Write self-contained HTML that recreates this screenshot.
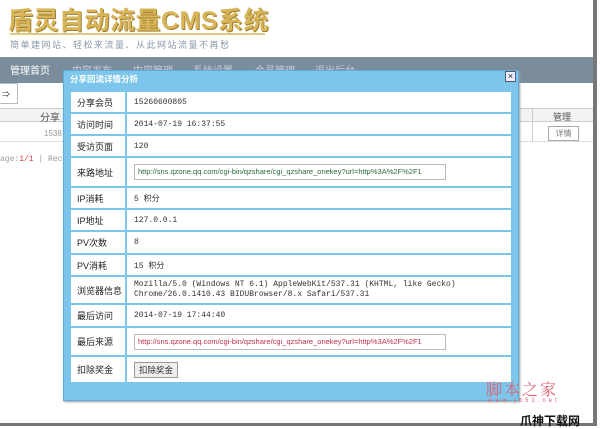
<!DOCTYPE html>
<html><head><meta charset="utf-8"><style>
*{margin:0;padding:0;box-sizing:border-box}
body{width:600px;height:429px;background:#fff;position:relative;overflow:hidden;font-family:"Liberation Sans","Noto Sans CJK SC",sans-serif;font-size:9px;color:#333}
.abs{position:absolute}
.mono{font-family:"Liberation Mono","Noto Sans CJK SC",monospace;font-size:8px}
.row{position:absolute;left:71px;width:440px;background:#fff;border-top:2px solid #7cc6ec}
.lab{position:absolute;left:0;top:0;bottom:0;width:56px;border-right:2px solid #7cc6ec;padding-left:6px;display:flex;align-items:center;font-size:9px;color:#222}
.val{position:absolute;left:63px;top:0;bottom:0;right:4px;display:flex;align-items:center}
.inp{border:1px solid #bbb;height:16px;width:312px;font-size:7.5px;padding-left:3px;line-height:14px;white-space:nowrap;overflow:hidden;color:#2a6a3a}
</style></head><body>
<div class="abs" style="left:8px;top:1px;font-size:25px;font-weight:bold;color:#d9b55a;letter-spacing:0.5px;text-shadow:1px 1px 0 #a08030">盾灵自动流量CMS系统</div>
<div class="abs" style="left:10px;top:33px;width:255px;height:2px;background:#e0c880"></div>
<div class="abs" style="left:10px;top:38px;font-size:9px;color:#8899aa;letter-spacing:1.5px">简单建网站、轻松来流量、从此网站流量不再愁</div>
<div class="abs" style="left:0;top:57px;width:593px;height:26px;background:#7b8d9a"></div>
<div class="abs" style="left:10px;top:62px;color:#fff;font-size:10px">管理首页</div>
<div class="abs" style="left:72px;top:62px;color:#ccd;font-size:10px">内容发布</div>
<div class="abs" style="left:133px;top:62px;color:#ccd;font-size:10px">内容管理</div>
<div class="abs" style="left:193px;top:62px;color:#ccd;font-size:10px">系统设置</div>
<div class="abs" style="left:255px;top:62px;color:#ccd;font-size:10px">会员管理</div>
<div class="abs" style="left:315px;top:62px;color:#ccd;font-size:10px">退出后台</div>
<div class="abs" style="left:0;top:83px;width:18px;height:21px;border:1px solid #bbb;border-left:none;font-size:8px;padding:5px 2px">⇒</div>
<div class="abs" style="left:0;top:108px;width:593px;height:14px;background:#f0f2f4;border-top:1px solid #ccc;border-bottom:1px solid #ccc"></div>
<div class="abs" style="left:40px;top:109px;font-size:10px;color:#555">分享</div>
<div class="abs" style="left:532px;top:108px;height:33px;border-left:1px solid #ccc"></div>
<div class="abs" style="left:553px;top:110px;font-size:9px;color:#555">管理</div>
<div class="abs" style="left:548px;top:126px;width:31px;height:15px;border:1px solid #aaa;font-size:8px;color:#777;text-align:center;line-height:13px">详情</div>
<div class="abs" style="left:0;top:141px;width:593px;border-top:1px solid #ddd"></div>
<div class="abs" style="left:44px;top:129px;font-size:8px;color:#999">1538</div>
<div class="abs mono" style="left:0;top:155px;color:#999">age:<span style="color:#c44">1/1</span> | Reco</div>
<div class="abs" style="left:593px;top:0;width:4px;height:426px;background:#777"></div>
<div class="abs" style="left:0;top:423px;width:597px;height:3px;background:#777"></div>
<div class="abs" style="left:63px;top:70px;width:456px;height:331px;background:#7cc6ec;border:1px solid #5aaedc;box-shadow:1px 1px 2px #999"></div>
<div class="abs" style="left:70px;top:73px;color:#fff;font-size:8.5px;font-weight:bold">分享回流详情分析</div>
<div class="abs" style="left:505px;top:71px;width:11px;height:11px;background:#eef;border:1px solid #557;font-size:9px;line-height:9px;text-align:center;color:#223">×</div>
<div class="abs" style="left:71px;top:88px;width:440px;height:295px;background:#7cc6ec"></div>
<div class="row" style="top:90px;height:22px"><div class="lab">分享会员</div><div class="val mono">15260600805</div></div>
<div class="row" style="top:112px;height:22px"><div class="lab">访问时间</div><div class="val mono">2014-07-19 16:37:55</div></div>
<div class="row" style="top:134px;height:22px"><div class="lab">受访页面</div><div class="val mono">120</div></div>
<div class="row" style="top:156px;height:30px"><div class="lab">来路地址</div><div class="val"><div class="inp">http://sns.qzone.qq.com/cgi-bin/qzshare/cgi_qzshare_onekey?url=http%3A%2F%2F1</div></div></div>
<div class="row" style="top:186px;height:22px"><div class="lab">IP消耗</div><div class="val mono">5 积分</div></div>
<div class="row" style="top:208px;height:22px"><div class="lab">IP地址</div><div class="val mono">127.0.0.1</div></div>
<div class="row" style="top:230px;height:23px"><div class="lab">PV次数</div><div class="val mono">8</div></div>
<div class="row" style="top:253px;height:22px"><div class="lab">PV消耗</div><div class="val mono">15 积分</div></div>
<div class="row" style="top:275px;height:28px"><div class="lab">浏览器信息</div><div class="val mono" style="line-height:10px">Mozilla/5.0 (Windows NT 6.1) AppleWebKit/537.31 (KHTML, like Gecko)<br>Chrome/26.0.1410.43 BIDUBrowser/8.x Safari/537.31</div></div>
<div class="row" style="top:303px;height:23px"><div class="lab">最后访问</div><div class="val mono">2014-07-19 17:44:40</div></div>
<div class="row" style="top:326px;height:29px"><div class="lab">最后来源</div><div class="val"><div class="inp" style="color:#c03050">http://sns.qzone.qq.com/cgi-bin/qzshare/cgi_qzshare_onekey?url=http%3A%2F%2F1</div></div></div>
<div class="row" style="top:355px;height:27px"><div class="lab">扣除奖金</div><div class="val"><div style="border:1px solid #999;background:#eee;font-size:8.5px;padding:1px 4px">扣除奖金</div></div></div>
<div class="abs" style="left:486px;top:377px;font-size:16px;color:#e06070;letter-spacing:2px;font-family:'Noto Serif CJK SC',serif">脚本之家</div>
<div class="abs" style="left:488px;top:398px;font-size:6px;color:#e06070;letter-spacing:3px">www.jb51.net</div>
<div class="abs" style="left:520px;top:412px;font-size:12px;font-weight:bold;color:#111">爪神下载网</div>
</body></html>
